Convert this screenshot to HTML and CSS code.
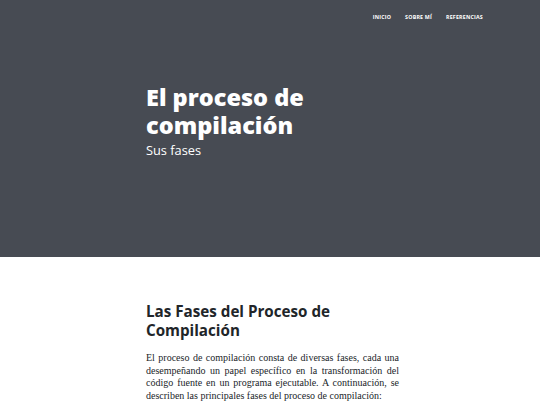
FILE: index.html
```html
<!DOCTYPE html>
<html lang="es">
<head>
<meta charset="utf-8">
<title>El proceso de compilación</title>
<link rel="stylesheet" href="styles.css">
</head>
<body>
<header class="masthead">
  <nav class="nav">
    <a class="nav-link" href="#">Inicio</a>
    <a class="nav-link" href="#">Sobre mí</a>
    <a class="nav-link" href="#">Referencias</a>
  </nav>
  <div class="hero">
    <h1 class="hero-title">El proceso de compilación</h1>
    <p class="hero-sub">Sus fases</p>
  </div>
</header>
<main class="content">
  <h2 class="section-title">Las Fases del Proceso de Compilación</h2>
  <p class="text">El proceso de compilación consta de diversas fases, cada una desempeñando un papel específico en la transformación del código fuente en un programa ejecutable. A continuación, se describen las principales fases del proceso de compilación:</p>
</main>
</body>
</html>
```

FILE: styles.css
```css
html, body {
  margin: 0;
  padding: 0;
  background: #ffffff;
}

.masthead {
  background: #474b53;
  height: 257px;
  display: flex;
  flex-direction: column;
}

.nav {
  display: flex;
  justify-content: flex-end;
  gap: 14px;
  padding: 12px 57px 0 0;
  height: 10px;
}

.nav-link {
  font-family: "Open Sans", sans-serif;
  font-weight: 700;
  font-size: 5.3px;
  line-height: 10px;
  letter-spacing: 0.2px;
  text-transform: uppercase;
  color: #ffffff;
  text-decoration: none;
}

.hero {
  margin: 61px 0 0 146px;
  width: 280px;
}

.hero-title {
  font-family: "Open Sans", sans-serif;
  font-weight: 800;
  font-size: 23.5px;
  line-height: 28px;
  color: #ffffff;
  margin: 0;
}

.hero-sub {
  font-family: "Open Sans", sans-serif;
  font-weight: 400;
  font-size: 12.8px;
  line-height: 16px;
  color: #ffffff;
  margin: 3px 0 0 0;
}

.content {
  margin: 0 0 0 146px;
  width: 253px;
  padding-top: 45px;
}

.section-title {
  font-family: "Open Sans", sans-serif;
  font-weight: 700;
  font-size: 15.2px;
  line-height: 19px;
  color: #212529;
  margin: 0;
}

.text {
  font-family: "Liberation Serif", serif;
  font-size: 10px;
  line-height: 12.6px;
  color: #212529;
  text-align: justify;
  margin: 12px 0 0 0;
}
```
